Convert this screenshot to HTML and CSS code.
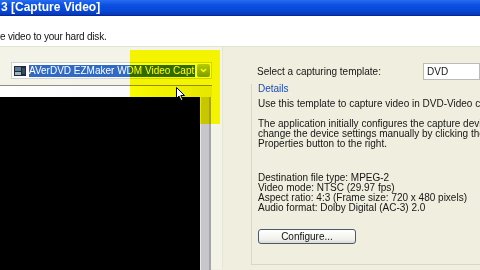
FILE: index.html
```html
<!DOCTYPE html>
<html>
  <head>
    <meta charset="UTF-8">
    <title>Capture Video</title>
    <link rel="stylesheet" href="styles.css">
  </head>
  <body>
    <div class="window">
      <div class="titlebar">3 [Capture Video]</div>
      <div class="header">e video to your hard disk.</div>
      <div class="content">
        <div class="left">
          <div class="combo">
            <svg class="dev-icon" width="12" height="12" viewBox="0 0 12 12">
              <rect x="0" y="1" width="12" height="10" fill="#1e2a36"/>
              <rect x="1" y="2" width="6" height="4" fill="#5e7d94"/>
              <rect x="8" y="3" width="3" height="6" fill="#3a4d5e"/>
              <rect x="1" y="7" width="6" height="3" fill="#9fb4c4"/>
            </svg>
            <span class="combo-text">AVerDVD EZMaker WDM Video Capt</span>
            <span class="combo-btn">
              <svg width="7" height="5" viewBox="0 0 7 5"><path d="M1 1 L3.5 3.5 L6 1" stroke="#fff" stroke-width="1.5" fill="none"/></svg>
            </span>
          </div>
          <div class="preview">
            <div class="preview-strip"></div>
            <div class="preview-row">
              <div class="screen"></div>
              <div class="scroll"></div>
            </div>
          </div>
        </div>
        <div class="right">
          <div class="template-row">
            <span class="label">Select a capturing template:</span>
            <span class="select">DVD</span>
          </div>
          <div class="details">
            <p class="legend">Details</p>
            <p class="intro">Use this template to capture video in DVD-Video compatible format.</p>
            <p class="note">The application initially configures the capture device<br>change the device settings manually by clicking the<br>Properties button to the right.</p>
            <p class="specs">Destination file type: MPEG-2<br>Video mode: NTSC (29.97 fps)<br>Aspect ratio: 4:3 (Frame size: 720 x 480 pixels)<br>Audio format: Dolby Digital (AC-3) 2.0</p>
            <button class="configure">Configure...</button>
          </div>
        </div>
      </div>
      <div class="highlight"></div>
      <svg class="cursor" width="10" height="15" viewBox="0 0 10 15">
        <path d="M0.5 0.5 L0.5 11.5 L3 9 L5 13.5 L6.8 12.7 L4.8 8.5 L8.5 8.5 Z" fill="#fff" stroke="#000" stroke-width="1"/>
      </svg>
    </div>
  </body>
</html>
```

FILE: styles.css
```css
body {
  margin: 0;
  padding: 0;
  font-family: "Liberation Sans", Arial, sans-serif;
  overflow: hidden;
}

.window {
  position: relative;
  width: 480px;
  height: 270px;
  overflow: hidden;
  background-color: #f0eede;
}

.titlebar {
  height: 15px;
  line-height: 15px;
  padding-left: 1px;
  color: #fff;
  font-family: "Liberation Sans", Arial, sans-serif;
  font-weight: bold;
  font-size: 12px;
  background: linear-gradient(#2a6cf0 0%, #0a50e2 35%, #0846d4 75%, #0737b4 100%);
  border-bottom: 1px solid #06289a;
  white-space: nowrap;
}

.header {
  height: 31px;
  box-sizing: border-box;
  padding-top: 16px;
  background-color: #fff;
  font-size: 10px;
  line-height: 10px;
  letter-spacing: -0.2px;
  color: #111;
  white-space: nowrap;
  border-bottom: 1px solid #e4e2d2;
}

.content {
  display: flex;
  height: 222px;
}

.left {
  width: 222px;
  padding-top: 15px;
  background-color: #f4f3e7;
  border-right: 1px solid #e6e4d4;
}

.combo {
  display: flex;
  align-items: center;
  margin-left: 11px;
  width: 201px;
  height: 17px;
  box-sizing: border-box;
  border: 1px solid #cfd3d8;
  background-color: #fff;
  padding: 1px;
}

.dev-icon {
  margin-left: 1px;
  margin-right: 3px;
}

.combo-text {
  flex: 1;
  height: 12px;
  line-height: 12px;
  font-size: 10px;
  color: #fff;
  background-color: #316ac5;
  white-space: nowrap;
  overflow: hidden;
}

.combo-btn {
  display: flex;
  align-items: center;
  justify-content: center;
  width: 13px;
  height: 13px;
  margin-left: 2px;
  background: linear-gradient(#b8ccf8, #7b9de8);
  border-radius: 2px;
}

.preview {
  margin-top: 6px;
  width: 212px;
  border-top: 1px solid #8e8e86;
}

.preview-strip {
  height: 11px;
  background: linear-gradient(90deg, #ffffff 0%, #fbfbfb 60%, #e6e6e6 100%);
}

.preview-row {
  display: flex;
  height: 200px;
}

.screen {
  width: 200px;
  background-color: #000;
}

.scroll {
  width: 8px;
  background-color: #c7c6ca;
  border-left: 1px solid #e8e8e8;
  border-right: 2px solid #a6a5aa;
}

.right {
  flex: 1;
  padding-top: 16px;
  padding-left: 28px;
  font-size: 10px;
  color: #151515;
  white-space: nowrap;
  overflow: hidden;
}

.template-row {
  display: flex;
  align-items: center;
  height: 17px;
  margin-left: 6px;
}

.label {
  width: 176px;
}

.select {
  width: 60px;
  height: 17px;
  line-height: 15px;
  box-sizing: border-box;
  padding-left: 3px;
  font-size: 10px;
  background-color: #fff;
  border: 1px solid #b9bcb8;
}

.details {
  margin-top: 4px;
  padding-left: 6px;
  padding-bottom: 20px;
  border-left: 1px solid #d8d6c6;
  border-bottom: 1px solid #d8d6c6;
}

.details p {
  margin: 0;
  line-height: 10px;
}

.legend {
  color: #1c4bb8;
}

.intro {
  padding-top: 5px;
}

.note {
  padding-top: 10px;
  line-height: 9px;
}

.specs {
  padding-top: 24px;
}

.configure {
  display: block;
  margin-top: 16px;
  width: 98px;
  height: 15px;
  padding: 0;
  font-family: "Liberation Sans", Arial, sans-serif;
  font-size: 10px;
  color: #111;
  background: linear-gradient(#ffffff, #f2f1ec 70%, #dcdad2);
  border: 1px solid #4a5a6a;
  border-radius: 3px;
}

.highlight {
  position: absolute;
  left: 130px;
  top: 50px;
  width: 90px;
  height: 74px;
  background-color: #ffff00;
  mix-blend-mode: multiply;
}

.cursor {
  position: absolute;
  left: 176px;
  top: 87px;
}
```
